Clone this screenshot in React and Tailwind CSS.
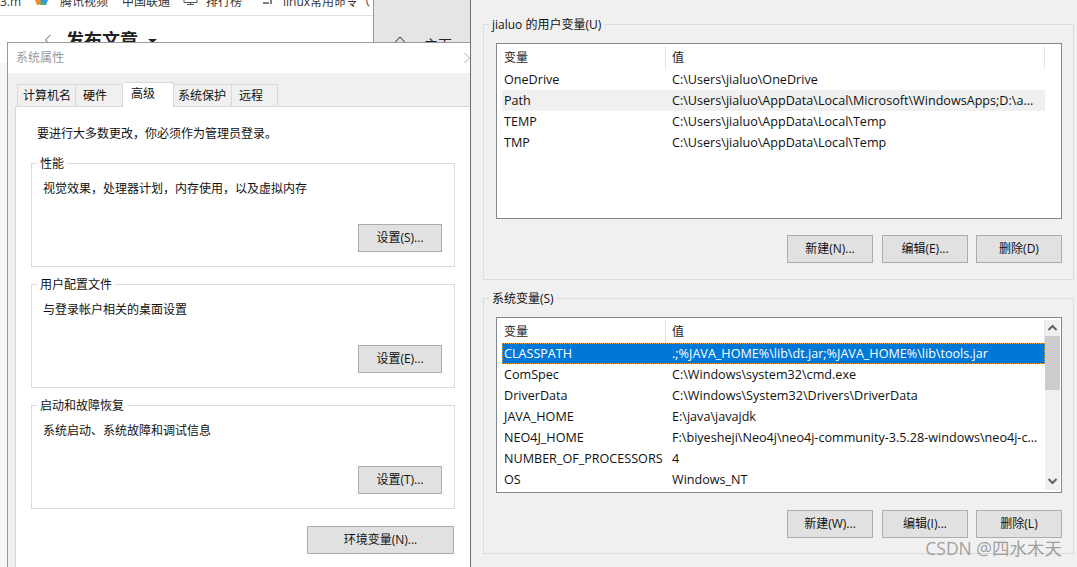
import React from 'react';

const font = 'font-["Open_Sans","Noto_Sans_CJK_SC",sans-serif]';

const Btn = ({ children, className = '' }) => (
  <div className={`flex items-center justify-center h-[28px] bg-[#e1e1e1] border border-[#adadad] text-[12px] text-[#111] ${className}`}>
    {children}
  </div>
);

const Group = ({ title, text, button }) => (
  <div className="relative h-[104px] border border-[#dcdcdc] pl-[11px] pr-[12px] pt-[16px] flex flex-col">
    <span className="absolute left-[5px] -top-[8px] bg-white px-[3px] text-[12px] leading-[16px] text-[#111]">{title}</span>
    <p className="text-[12px] leading-[18px] text-[#111]">{text}</p>
    <div className="mt-auto mb-[14px] flex justify-end">
      <Btn className="w-[84px]">{button}</Btn>
    </div>
  </div>
);

const tabs = [
  { name: '计算机名', w: 'w-[59px] pl-[5px]' },
  { name: '硬件', w: 'w-[47px] pl-[7px]' },
  { name: '高级', w: 'w-[51px] pl-[8px]', active: true },
  { name: '系统保护', w: 'w-[58px] pl-[4px]' },
  { name: '远程', w: 'w-[46px] pl-[7px]' },
];

const VarList = ({ rows, selected, hover, scroll }) => (
  <div className="relative h-[176px] border border-[#828790] bg-white pl-[2px] pr-[1px] py-[2px] flex">
    <div className="flex-1 min-w-0">
      <div className="flex h-[23px] text-[12px] text-[#222]">
        <div className="w-[167px] pl-[5px] pt-[3px] border-r border-[#e5e5e5]">变量</div>
        <div className="flex-1 pl-[6px] pt-[3px] border-r border-[#e5e5e5]">值</div>
      </div>
      {rows.map(([k, v]) => (
        <div
          key={k}
          className={`ml-[3px] flex h-[21px] items-center pt-[2px] text-[12.6px] whitespace-nowrap ${
            k === selected
              ? 'bg-[#0078d7] text-white outline-1 outline-dotted outline-[#f0a040] -outline-offset-1'
              : k === hover
                ? 'bg-[#f0f0f0] text-[#111]'
                : 'text-[#111]'
          }`}
        >
          <div className="w-[168px] pl-[2px] shrink-0">{k}</div>
          <div className="pl-[2px]">{v}</div>
        </div>
      ))}
    </div>
    <div className={`w-[15px] flex flex-col items-center ${scroll ? 'bg-[#f0f0f0]' : ''}`}>
      {scroll && (
        <>
          <svg className="h-[16px] w-[15px]" viewBox="0 0 15 16" fill="none" stroke="#606060" strokeWidth="2">
            <path d="M3.5 10l4-4 4 4" />
          </svg>
          <div className="w-[15px] h-[54px] bg-[#cdcdcd]" />
          <svg className="mt-auto h-[16px] w-[15px]" viewBox="0 0 15 16" fill="none" stroke="#606060" strokeWidth="2">
            <path d="M3.5 5l4 4 4-4" />
          </svg>
        </>
      )}
    </div>
  </div>
);

const userRows = [
  ['OneDrive', 'C:\\Users\\jialuo\\OneDrive'],
  ['Path', 'C:\\Users\\jialuo\\AppData\\Local\\Microsoft\\WindowsApps;D:\\a...'],
  ['TEMP', 'C:\\Users\\jialuo\\AppData\\Local\\Temp'],
  ['TMP', 'C:\\Users\\jialuo\\AppData\\Local\\Temp'],
];

const sysRows = [
  ['CLASSPATH', '.;%JAVA_HOME%\\lib\\dt.jar;%JAVA_HOME%\\lib\\tools.jar'],
  ['ComSpec', 'C:\\Windows\\system32\\cmd.exe'],
  ['DriverData', 'C:\\Windows\\System32\\Drivers\\DriverData'],
  ['JAVA_HOME', 'E:\\java\\javajdk'],
  ['NEO4J_HOME', 'F:\\biyesheji\\Neo4j\\neo4j-community-3.5.28-windows\\neo4j-c...'],
  ['NUMBER_OF_PROCESSORS', '4'],
  ['OS', 'Windows_NT'],
];

export default function App() {
  return (
    <div className={`relative flex h-[567px] w-[1077px] overflow-hidden bg-white ${font}`}>
      {/* browser window behind the dialog */}
      <div className="relative flex w-[470px] shrink-0 flex-col">
        <div className="flex h-[63px] shrink-0">
          <div className="w-[373px] shrink-0">
            <div className="flex h-[16px] items-end overflow-hidden border-b border-[#e0e0e0] text-[12px] leading-[14px] text-[#333] whitespace-nowrap">
              <span className="w-[35px] pb-[6px]">3.m</span>
              <svg className="mb-[10px] h-[5px] w-[13px]" viewBox="0 0 13 5">
                <path d="M0 0h7l-3 5H2z" fill="#f08a24" />
                <path d="M6 0h7l-2 5H5z" fill="#2f9be0" />
                <path d="M4 3h6l-1 2H5z" fill="#5fb83c" />
              </svg>
              <span className="ml-[12px] w-[62px] pb-[6px]">腾讯视频</span>
              <span className="w-[61px] pb-[6px]">中国联通</span>
              <svg className="mb-[10px] h-[5px] w-[15px]" viewBox="0 0 15 5" fill="none" stroke="#555" strokeWidth="1">
                <path d="M1 0v2.500h13V0M7.500 2.500V5M4 4.500h7" />
              </svg>
              <span className="ml-[8px] w-[56px] pb-[6px]">排行榜</span>
              <svg className="mb-[10px] h-[5px] w-[13px]" viewBox="0 0 13 5" fill="none" stroke="#555" strokeWidth="1.500">
                <path d="M1 3h6M9 0v4" />
              </svg>
              <span className="ml-[8px] w-[90px] overflow-hidden pb-[6px]">linux常用命令（</span>
            </div>
            <div className="flex items-center pt-[15px] pl-[44px]">
              <svg className="h-[12px] w-[8px]" viewBox="0 0 8 12" fill="none" stroke="#555" strokeWidth="1">
                <path d="M6.500 1L1.500 6l5 5" />
              </svg>
              <span className="ml-[14px] text-[18px] font-bold leading-[18px] text-[#222]">发布文章</span>
              <svg className="ml-[10px] mt-[2px] h-[4px] w-[9px]" viewBox="0 0 9 4">
                <path d="M0 0h9L4.500 4z" fill="#222" />
              </svg>
            </div>
          </div>
          <div className="flex flex-1 items-start border-l border-[#999] bg-[#e5e5e5] pl-[19px] pt-[36px]">
            <svg className="h-[8px] w-[14px]" viewBox="0 0 14 8" fill="none" stroke="#222" strokeWidth="1">
              <path d="M1 7.500l6-6.500 6 6.500" />
            </svg>
            <span className="ml-[17px] text-[14px] leading-[18px] text-[#222]">主页</span>
          </div>
        </div>
        <div className="flex-1 bg-[#f5f5f5]" />

        <div className="absolute left-[7px] top-[42px] flex h-[525px] w-[463px] flex-col border-l border-t border-[#9a9a9a] bg-[#f0f0f0]">
          <div className="flex h-[30px] shrink-0 items-center justify-between bg-white pl-[8px] text-[12px] text-[#999]">
            系统属性
            <svg className="h-[12px] w-[6px]" viewBox="0 0 6 12" fill="none" stroke="#aaa" strokeWidth="1">
              <path d="M0.500 1l5 5-5 5" />
            </svg>
          </div>
          <div className="flex h-[33px] shrink-0 items-end pl-[9px]">
            {tabs.map((t) => (
              <div
                key={t.name}
                className={`flex items-center justify-start border border-[#d9d9d9] border-l-0 first:border-l text-[12px] text-[#111] ${t.w} ${
                  t.active
                    ? 'relative z-10 h-[25px] border-l border-b-0 bg-white -mb-[1px] pb-[3px]'
                    : 'h-[22px] bg-[#f0f0f0] border-b-0'
                }`}
              >
                {t.name}
              </div>
            ))}
          </div>
          <div className="ml-[7px] flex-1 border-l border-t border-[#d9d9d9] bg-white px-[15px] pt-[18px]">
            <p className="ml-[6px] text-[12px] leading-[18px] text-[#111]">要进行大多数更改，你必须作为管理员登录。</p>
            <div className="mt-[20px] flex flex-col gap-[17px] w-[424px]">
              <Group title="性能" text="视觉效果，处理器计划，内存使用，以及虚拟内存" button="设置(S)..." />
              <Group title="用户配置文件" text="与登录帐户相关的桌面设置" button="设置(E)..." />
              <Group title="启动和故障恢复" text="系统启动、系统故障和调试信息" button="设置(T)..." />
            </div>
            <div className="mt-[17px] flex justify-end w-[423px]">
              <Btn className="w-[147px]">环境变量(N)...</Btn>
            </div>
          </div>
        </div>
      </div>

      {/* environment variables dialog */}
      <div className="flex-1 border-l border-[#707070] bg-[#f0f0f0] pl-[12px] pr-[3px] pt-[24px] text-[#111]">
        <div className="relative h-[256px] border border-[#dcdcdc] pl-[12px] pr-[11px] pt-[18px]">
          <span className="absolute left-[5px] -top-[8px] bg-[#f0f0f0] px-[3px] text-[12px] leading-[16px]">jialuo 的用户变量(U)</span>
          <VarList rows={userRows} hover="Path" />
          <div className="mt-[16px] flex justify-end gap-[8px]">
            <Btn className="mr-[1px] w-[86px]">新建(N)...</Btn>
            <Btn className="w-[86px]">编辑(E)...</Btn>
            <Btn className="w-[86px]">删除(D)</Btn>
          </div>
        </div>
        <div className="relative mt-[18px] h-[256px] border border-[#dcdcdc] pl-[12px] pr-[11px] pt-[18px]">
          <span className="absolute left-[5px] -top-[8px] bg-[#f0f0f0] px-[3px] text-[12px] leading-[16px]">系统变量(S)</span>
          <VarList rows={sysRows} selected="CLASSPATH" scroll />
          <div className="mt-[17px] flex justify-end gap-[8px]">
            <Btn className="mr-[1px] w-[86px]">新建(W)...</Btn>
            <Btn className="w-[86px]">编辑(I)...</Btn>
            <Btn className="w-[86px]">删除(L)</Btn>
          </div>
        </div>
      </div>

      <span className="absolute right-[15px] bottom-[8px] text-[17.5px] leading-[22px] text-[#8a8a8a]/80">CSDN @四水木天</span>
    </div>
  );
}
